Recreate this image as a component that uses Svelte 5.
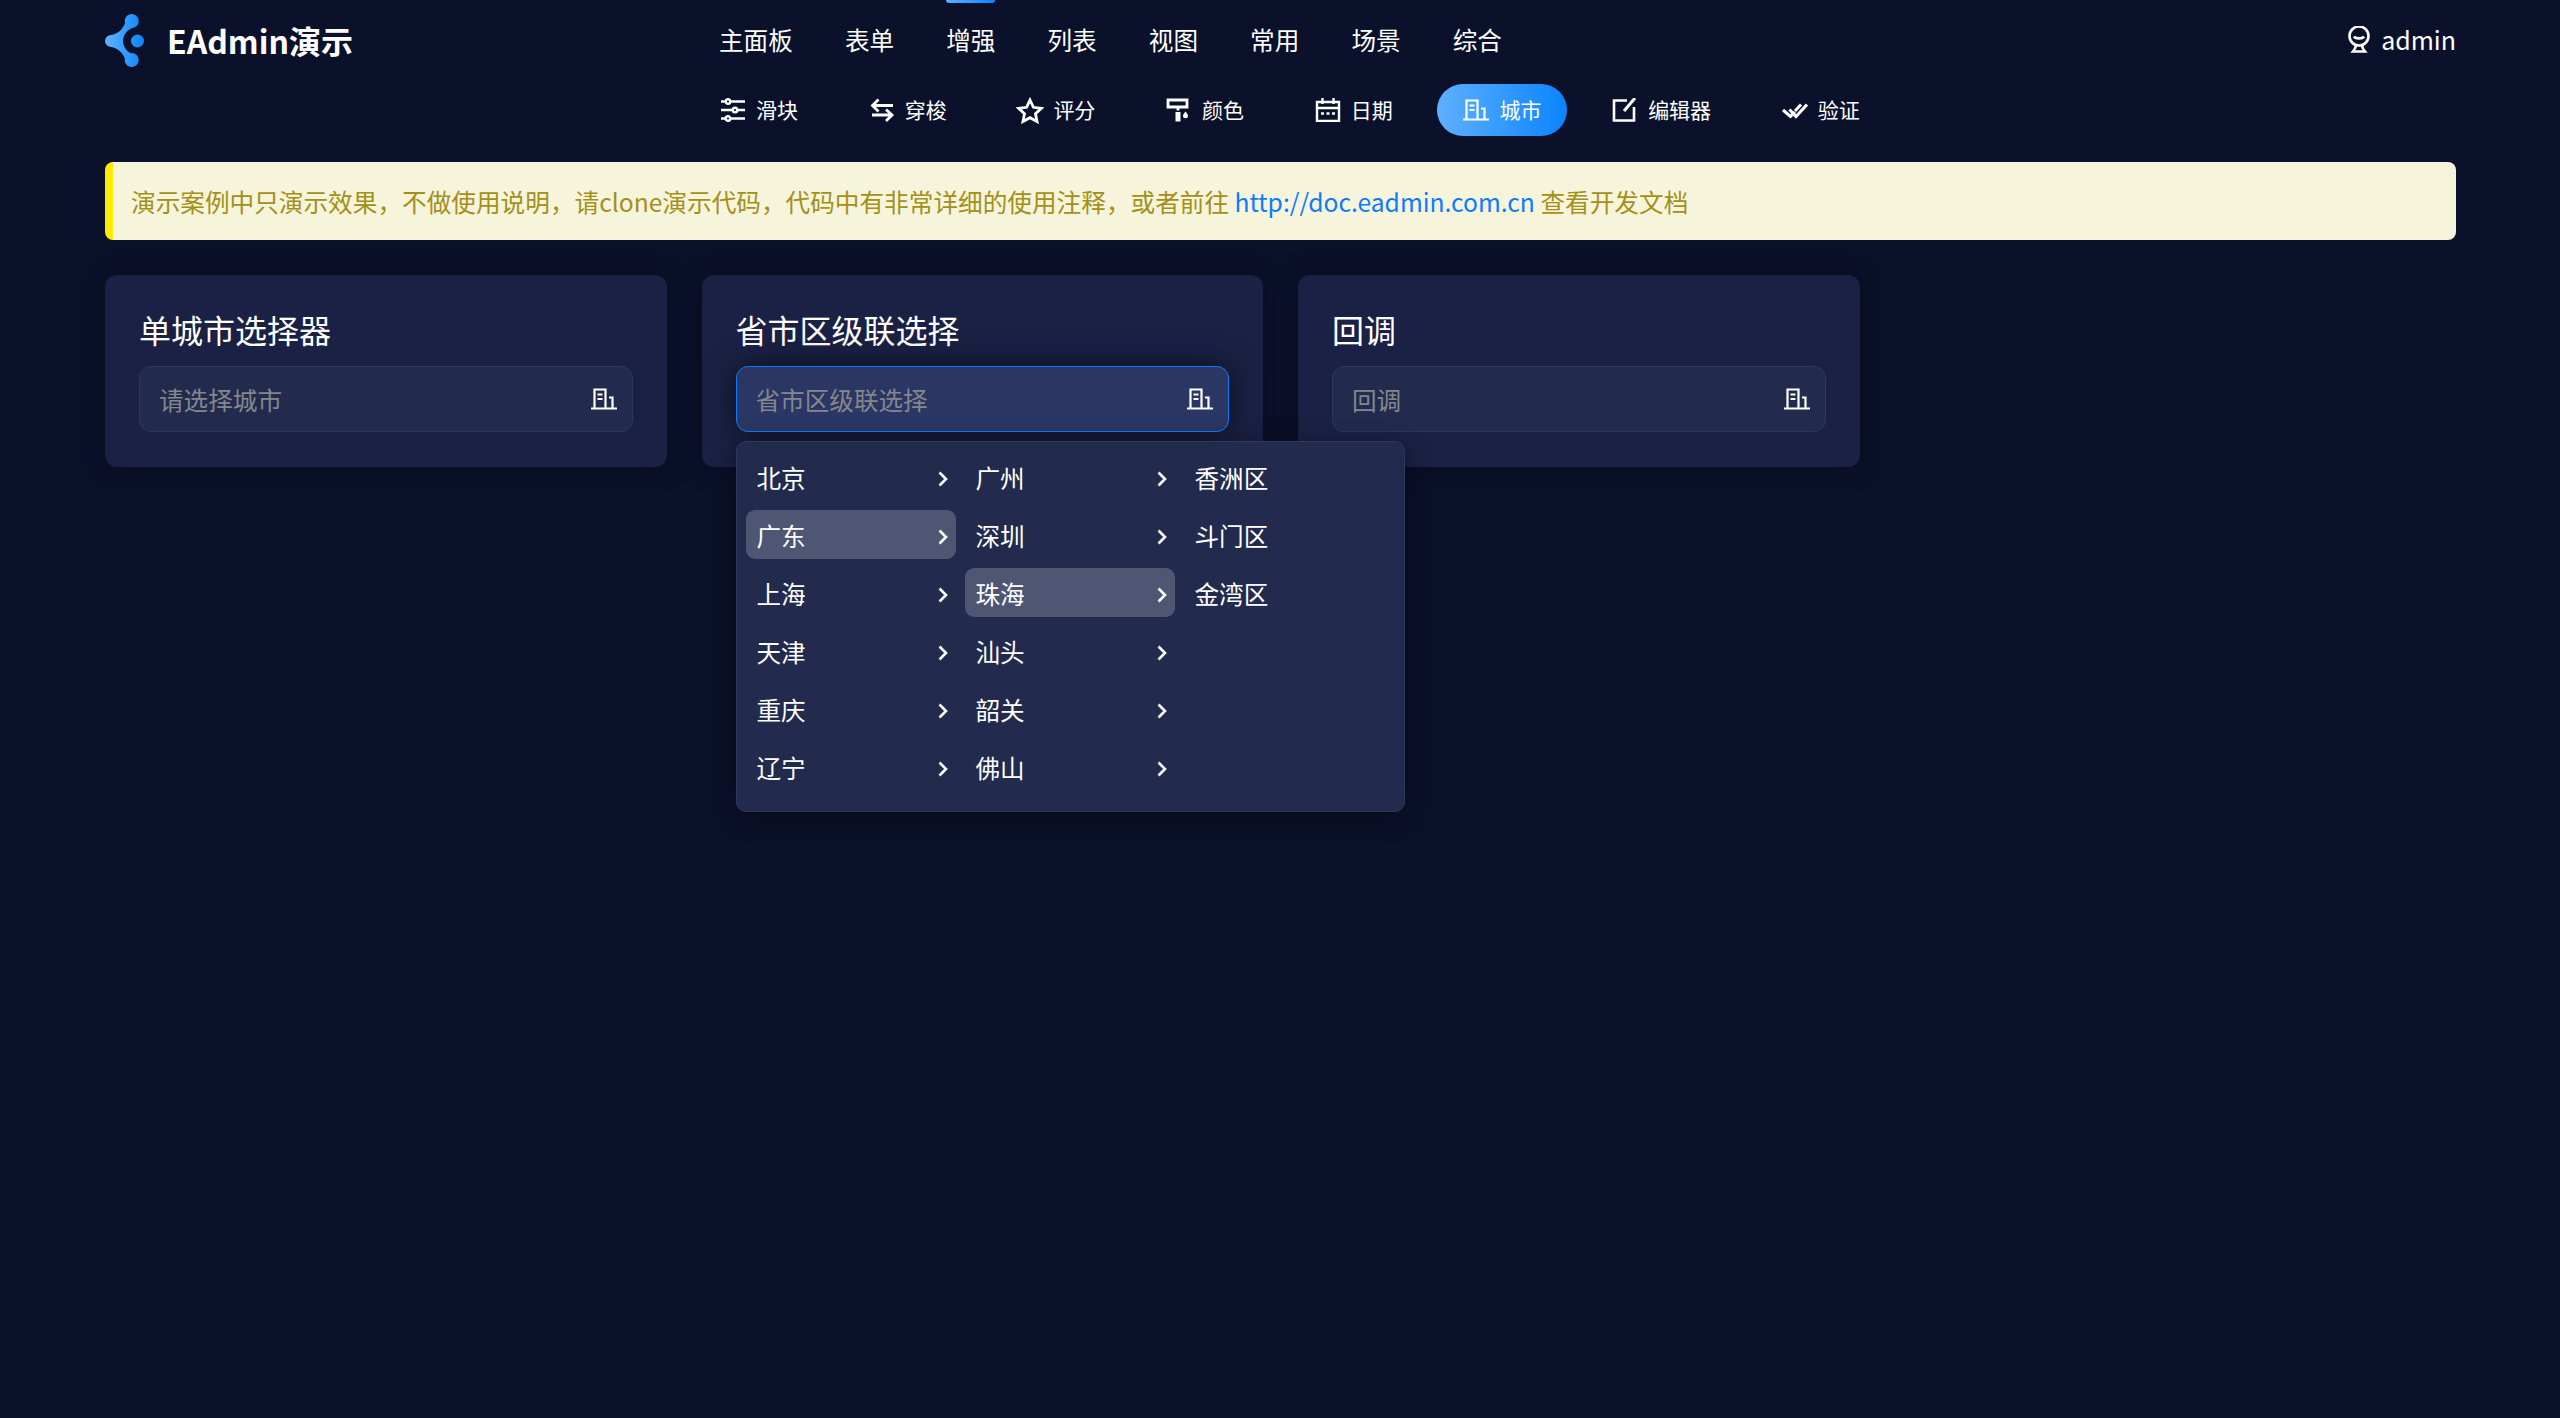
<script>
	const menus = ['主面板', '表单', '增强', '列表', '视图', '常用', '场景', '综合'];
	const subs = [
		{ name: '滑块', icon: 'sliders' },
		{ name: '穿梭', icon: 'swap' },
		{ name: '评分', icon: 'star' },
		{ name: '颜色', icon: 'roller' },
		{ name: '日期', icon: 'calendar' },
		{ name: '城市', icon: 'city', active: true },
		{ name: '编辑器', icon: 'edit' },
		{ name: '验证', icon: 'check' }
	];
	const columns = [
		{ items: ['北京', '广东', '上海', '天津', '重庆', '辽宁'], active: 1, arrow: true },
		{ items: ['广州', '深圳', '珠海', '汕头', '韶关', '佛山'], active: 2, arrow: true },
		{ items: ['香洲区', '斗门区', '金湾区'], active: -1, arrow: false }
	];
	const cards = [
		{ title: '单城市选择器', placeholder: '请选择城市' },
		{ title: '省市区级联选择', placeholder: '省市区级联选择', open: true },
		{ title: '回调', placeholder: '回调' }
	];
</script>

{#snippet cityIcon()}
	<svg class="icon city" viewBox="0 0 26 22" fill="none" stroke="currentColor" stroke-width="2.200">
		<path d="M0 20.500h26M3.500 20.500V1.500h11v19M18 9.500h3.500v11" />
		<path d="M6.500 6.500h5M6.500 11h5" />
	</svg>
{/snippet}

<div class="page">
	<header class="topbar">
		<div class="brand">
			<svg class="logo" viewBox="0 0 39 53">
				<defs>
					<linearGradient id="logoFill" gradientUnits="userSpaceOnUse" x1="0" x2="39" y1="0" y2="0">
						<stop offset="0" stop-color="#62b2ff" />
						<stop offset="1" stop-color="#0a84ff" />
					</linearGradient>
				</defs>
				<g fill="url(#logoFill)">
					<path d="M20 9C18 15 13 20 6 21A6 6 0 0 0 6 33C13 34 18 39 20 45L27 40C21 37 18 32 18 27C18 22 21 17 27 14Z" />
					<circle cx="26.700" cy="7" r="7" />
					<circle cx="26.700" cy="46" r="7" />
					<circle cx="32.500" cy="27" r="6.500" />
				</g>
			</svg>
			<span class="brand-name">EAdmin演示</span>
		</div>
		<nav class="menu">
			{#each menus as menu}
				<span class="menu-item" class:current={menu === '增强'}>{menu}</span>
			{/each}
		</nav>
		<div class="user">
			<svg class="user-icon" viewBox="0 0 24 27" fill="none" stroke="currentColor" stroke-width="2.600">
				<circle cx="12" cy="10" r="9.500" />
				<path d="M7 10.500c1.500 2.500 8.500 2.500 10 0" />
				<path d="M9 19c0 2.500-1 4-3 6.500h12c-2-2.500-3-4-3-6.500" />
			</svg>
			<span class="user-name">admin</span>
		</div>
	</header>

	<nav class="subnav">
		{#each subs as sub}
			<span class="sub-item" class:active={sub.active}>
				{#if sub.icon === 'sliders'}
					<svg class="icon" viewBox="0 0 26 24" fill="none" stroke="currentColor" stroke-width="2.400">
						<path d="M1 3.500h4.500M10.500 3.500h14.500M1 12h11.500M17.500 12h7.500M1 20.500h4.500M10.500 20.500h14.500" />
						<circle cx="8" cy="3.500" r="2.300" />
						<circle cx="15" cy="12" r="2.300" />
						<circle cx="8" cy="20.500" r="2.300" />
					</svg>
				{:else if sub.icon === 'swap'}
					<svg class="icon" viewBox="0 0 26 24" fill="none" stroke="currentColor" stroke-width="2.800">
						<path d="M24 7.500H4M9.500 1.500L3.500 7.500l6 6M3 17h20M17 11.500l6 5.500-6 6" />
					</svg>
				{:else if sub.icon === 'star'}
					<svg class="icon star" viewBox="0 0 28 27" fill="none" stroke="currentColor" stroke-width="2.800">
						<path d="M14 3l3.400 7.300 7.900 1-5.800 5.400 1.500 7.800L14 20.700 7 24.500l1.500-7.800L2.700 11.300l7.900-1z" />
					</svg>
				{:else if sub.icon === 'roller'}
					<svg class="icon" viewBox="0 0 26 24" fill="none" stroke="currentColor" stroke-width="2.800">
						<path d="M2 9V2h19v7zM12 9v3.500" />
						<path d="M9.500 14h5v9.500h-5z" fill="currentColor" stroke="none" />
						<path d="M19.500 13.500c1.500 2 2.500 3 2.500 4.300a2.500 2.500 0 0 1-5 0c0-1.300 1-2.300 2.500-4.300z" fill="currentColor" stroke="none" />
					</svg>
				{:else if sub.icon === 'calendar'}
					<svg class="icon" viewBox="0 0 26 24" fill="none" stroke="currentColor" stroke-width="2.400">
						<path d="M2 4h22v19H2zM2 10h22M7.500 0v6M18.500 0v6" />
						<path d="M6 15.500h3M11.500 15.500h3M17 15.500h3" stroke-width="2.600" />
					</svg>
				{:else if sub.icon === 'city'}
					<svg class="icon" viewBox="0 0 26 22" fill="none" stroke="currentColor" stroke-width="2.200">
						<path d="M0 20.500h26M3.500 20.500V1.500h11v19M18 9.500h3.500v11" />
						<path d="M6.500 6.500h5M6.500 11h5" />
					</svg>
				{:else if sub.icon === 'edit'}
					<svg class="icon" viewBox="0 0 26 24" fill="none" stroke="currentColor" stroke-width="2.600">
						<path d="M15 2.500H2v20h20V9" />
						<path d="M12 13L23 0" stroke-width="3" />
					</svg>
				{:else}
					<svg class="icon" viewBox="0 0 26 24" fill="none" stroke="currentColor" stroke-width="3">
						<path d="M1 12l7.500 6.500L13 14M7.500 11.500l6.500 7L25 6.500M13 13l6-6.500" />
					</svg>
				{/if}
				<span class="sub-name">{sub.name}</span>
			</span>
		{/each}
	</nav>

	<div class="notice">
		演示案例中只演示效果，不做使用说明，请clone演示代码，代码中有非常详细的使用注释，或者前往 <span class="doc-link">http://doc.eadmin.com.cn</span> 查看开发文档
	</div>

	<section class="cards">
		{#each cards as card}
			<div class="card">
				<h3>{card.title}</h3>
				<div class="field-wrap">
					<div class="field" class:focused={card.open}>
						<span class="placeholder">{card.placeholder}</span>
						{@render cityIcon()}
					</div>
					{#if card.open}
						<div class="cascader">
							{#each columns as col}
								<ul>
									{#each col.items as item, i}
										<li class:selected={i === col.active}>
											<span>{item}</span>
											{#if col.arrow}
												<svg class="chevron" viewBox="0 0 10 16" fill="none" stroke="currentColor" stroke-width="2.600">
													<path d="M1.500 1.500L8 8l-6.500 6.500" />
												</svg>
											{/if}
										</li>
									{/each}
								</ul>
							{/each}
						</div>
					{/if}
				</div>
			</div>
		{/each}
	</section>
</div>

<style>
	:global(body) {
		margin: 0;
		background: #0b112a;
	}

	.page {
		min-height: 1418px;
		box-sizing: border-box;
		padding: 0 104px 0 105px;
		color: #fff;
		font-family: "Noto Sans CJK SC", "Noto Sans", sans-serif;
	}

	.topbar {
		display: flex;
		align-items: center;
		height: 80px;
	}

	.brand {
		display: flex;
		align-items: center;
		gap: 23px;
		width: 614px;
	}

	.logo {
		width: 39px;
		height: 53px;
	}

	.brand-name {
		font-size: 32px;
		font-weight: 700;
	}

	.menu {
		display: flex;
		gap: 52.100px;
		flex: 1;
		font-size: 24.600px;
		height: 80px;
	}

	.menu-item {
		position: relative;
		line-height: 78px;
	}

	.menu-item.current::before {
		content: '';
		position: absolute;
		top: 0;
		left: 0;
		right: 0;
		height: 3px;
		border-radius: 0 0 3px 3px;
		background: linear-gradient(90deg, #5fb0ff, #0a84ff);
	}

	.user {
		display: flex;
		align-items: center;
		gap: 10px;
		font-size: 25px;
	}

	.user-name {
		margin-top: -2px;
	}

	.user-icon {
		width: 24px;
		height: 27px;
		margin-top: -2px;
	}

	.subnav {
		display: flex;
		gap: 18.700px;
		margin: 4px 0 26px 589px;
		height: 52px;
	}

	.sub-item {
		display: flex;
		align-items: center;
		gap: 10px;
		padding: 0 26px;
		height: 52px;
		border-radius: 26px;
		font-size: 21px;
	}

	.sub-name {
		margin-top: -2px;
	}

	.sub-item.active {
		background: linear-gradient(90deg, #5fb0ff, #0a84ff);
	}

	.icon {
		width: 26px;
		height: 24px;
		flex-shrink: 0;
	}

	.icon.star {
		width: 28px;
		height: 27px;
		margin: 0 -1px;
	}

	.notice {
		box-sizing: border-box;
		height: 78px;
		line-height: 78px;
		padding-left: 18px;
		border-left: 8px solid #ffea00;
		border-radius: 8px;
		background: #f7f4dc;
		color: #a39018;
		font-size: 24.650px;
		white-space: nowrap;
	}

	.doc-link {
		color: #0a7cff;
	}

	.cards {
		display: grid;
		grid-template-columns: repeat(4, 1fr);
		gap: 35px;
		margin-top: 35px;
	}

	.card {
		box-sizing: border-box;
		height: 192px;
		padding: 34px;
		border-radius: 12px;
		background: #1b2144;
		box-shadow: 0 0 24px rgba(0, 0, 0, 0.35);
	}

	h3 {
		margin: 0 0 17px;
		font-size: 32px;
		font-weight: 400;
		line-height: 40px;
	}

	.field-wrap {
		position: relative;
	}

	.field {
		display: flex;
		align-items: center;
		justify-content: space-between;
		box-sizing: border-box;
		height: 66px;
		padding: 0 15px 0 19px;
		border: 1px solid #2f3858;
		border-radius: 12px;
		background: #222b4d;
	}

	.field.focused {
		border-color: #0a7cff;
		background: #2a3663;
		box-shadow: 0 0 30px rgba(0, 0, 0, 0.6);
	}

	.placeholder {
		color: #85868e;
		font-size: 24.600px;
	}

	.field .city {
		width: 26px;
		height: 22px;
	}

	.cascader {
		position: absolute;
		top: 75px;
		left: 0;
		z-index: 2;
		display: flex;
		gap: 9px;
		box-sizing: border-box;
		width: 669px;
		height: 371px;
		padding: 10px 9px;
		border: 1px solid #2f3858;
		border-radius: 10px;
		background: #222a4d;
		box-shadow: 0 4px 24px rgba(0, 0, 0, 0.4);
	}

	ul {
		display: flex;
		flex-direction: column;
		gap: 9px;
		width: 210px;
		margin: 0;
		padding: 0;
		list-style: none;
	}

	li {
		display: flex;
		align-items: center;
		justify-content: space-between;
		box-sizing: border-box;
		height: 49px;
		padding: 0 8px 0 11px;
		border-radius: 9px;
		font-size: 24.600px;
	}

	li.selected {
		background: #4e5674;
	}

	.chevron {
		width: 10px;
		height: 16px;
		margin-top: 4px;
	}
</style>
